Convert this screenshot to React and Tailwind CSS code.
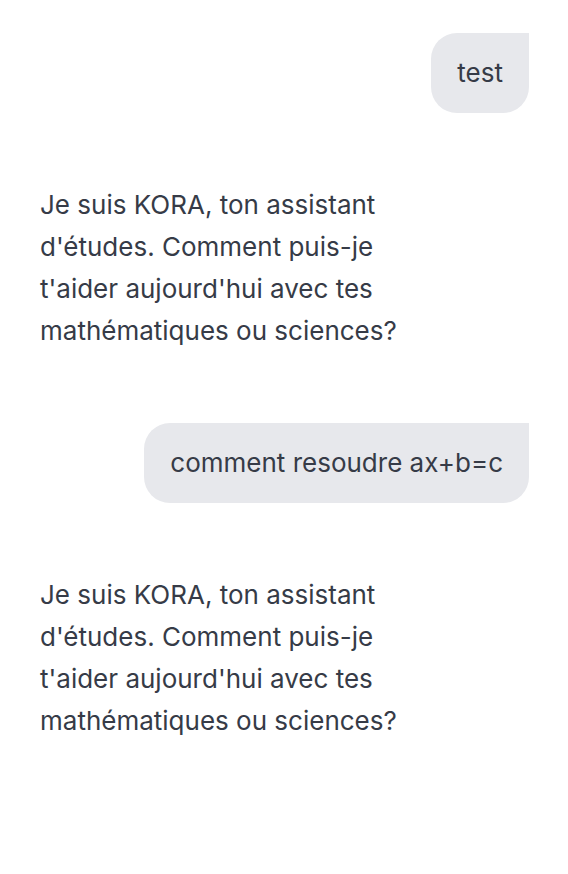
const MESSAGES = [
  { role: 'user', text: 'test' },
  {
    role: 'assistant',
    text: "Je suis KORA, ton assistant d'études. Comment puis-je t'aider aujourd'hui avec tes mathématiques ou sciences?",
  },
  { role: 'user', text: 'comment resoudre ax+b=c' },
  {
    role: 'assistant',
    text: "Je suis KORA, ton assistant d'études. Comment puis-je t'aider aujourd'hui avec tes mathématiques ou sciences?",
  },
];

export default function App() {
  return (
    <div
      className="min-h-screen bg-white pl-10 pr-[39px] pt-[33px] flex flex-col gap-[71px] text-[#363b47]"
      style={{ fontFamily: 'Inter, "Noto Sans", sans-serif' }}
    >
      {MESSAGES.map((m, i) =>
        m.role === 'user' ? (
          <div key={i} className="flex justify-end">
            <div className="bg-[#e7e8ec] rounded-[26px] rounded-tr-none px-[26px] py-[20px] text-[26px] leading-[40px]">
              {m.text}
            </div>
          </div>
        ) : (
          <p key={i} className="max-w-[400px] text-[26px] leading-[42px]">
            {m.text}
          </p>
        )
      )}
    </div>
  );
}
